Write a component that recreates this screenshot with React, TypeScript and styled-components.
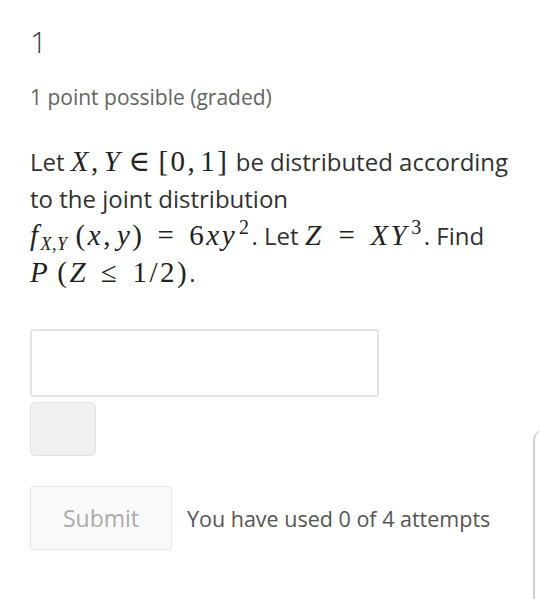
import React from "react";
import styled, { createGlobalStyle } from "styled-components";

const Global = createGlobalStyle`
  html, body { margin: 0; padding: 0; background: #fff; }
  body { font-family: "Open Sans", "Liberation Sans", sans-serif; }
`;

const Page = styled.div`
  position: relative;
  width: 540px;
  height: 599px;
  overflow: hidden;
  box-sizing: border-box;
  padding: 22px 0 0 30px;
`;

const Number = styled.h2`
  margin: 0;
  font-weight: 300;
  font-size: 30px;
  line-height: 40px;
  color: #3a3a3a;
`;

const Points = styled.div`
  margin-top: 22px;
  font-size: 21px;
  line-height: 26px;
  color: #646464;
`;

const Problem = styled.p`
  margin: 33px 0 0;
  width: 482px;
  font-size: 24px;
  line-height: 37px;
  color: #313131;
`;

const Math = styled.span`
  white-space: nowrap;
  font-family: "Liberation Serif", "DejaVu Serif", serif;
  font-size: 29px;
  letter-spacing: 2.5px;
  color: #222;
`;

const I = styled.i`
  font-style: italic;
`;

const Rel = styled.span<{ $m?: number }>`
  margin: 0 ${(p) => p.$m ?? 13}px;
`;

const Gap = styled.span<{ $w: number }>`
  display: inline-block;
  width: ${(p) => p.$w}px;
`;

const Sub = styled.sub`
  font-style: italic;
  font-size: 18px;
  letter-spacing: 0.5px;
  vertical-align: -5px;
  line-height: 0;
`;

const Sup = styled.sup`
  font-size: 20px;
  vertical-align: 11px;
  line-height: 0;
  margin-left: 2px;
`;

const Input = styled.div`
  margin-top: 38px;
  width: 349px;
  height: 68px;
  box-sizing: border-box;
  border: 2px solid #e4e4e4;
  border-radius: 3px;
  background: #fff;
`;

const Status = styled.div`
  margin-top: 5px;
  width: 66px;
  height: 54px;
  box-sizing: border-box;
  border: 1px solid #e2e2e2;
  border-radius: 5px;
  background: #f0f0f0;
`;

const Actions = styled.div`
  margin-top: 30px;
  display: flex;
  align-items: center;
  gap: 15px;
`;

const Submit = styled.button`
  width: 142px;
  height: 64px;
  box-sizing: border-box;
  border: 1px solid #e6e6e6;
  border-radius: 3px;
  background: #f9f9f9;
  color: #aaaaaa;
  font-family: "Open Sans", sans-serif;
  font-size: 23px;
  padding: 0;
`;

const Attempts = styled.span`
  font-size: 21.5px;
  color: #555;
`;

const SidePanel = styled.div`
  position: absolute;
  left: 533px;
  top: 430px;
  width: 40px;
  height: 200px;
  border-left: 2px solid #d0d0d0;
  border-top: 1px solid #d8d8d8;
  border-top-left-radius: 10px;
  box-sizing: border-box;
`;

export default function App() {
  return (
    <>
      <Global />
      <Page>
        <Number>1</Number>
        <Points>1 point possible (graded)</Points>
        <Problem>
          Let{" "}
          <Math>
            <I>X</I>,<Gap $w={3} />
            <I>Y</I>
            <Rel $m={6}>∈</Rel>[0,<Gap $w={3} />1]
          </Math>{" "}
          be distributed according to the joint distribution{" "}
          <Math>
            <I>f</I>
            <Sub>X,Y</Sub>
            <Gap $w={8} />(<I>x</I>,<Gap $w={4} />
            <I>y</I>)<Rel>=</Rel>6<I>xy</I>
            <Sup>2</Sup>
          </Math>
          . Let{" "}
          <Math>
            <I>Z</I>
            <Gap $w={2} />
            <Rel>=</Rel>
            <I>XY</I>
            <Sup>3</Sup>
          </Math>
          . Find{" "}
          <Math>
            <I>P</I>
            <Gap $w={7} />(<I>Z</I>
            <Rel>≤</Rel>1/2)
          </Math>
          .
        </Problem>
        <Input />
        <Status />
        <Actions>
          <Submit>Submit</Submit>
          <Attempts>You have used 0 of 4 attempts</Attempts>
        </Actions>
        <SidePanel />
      </Page>
    </>
  );
}
